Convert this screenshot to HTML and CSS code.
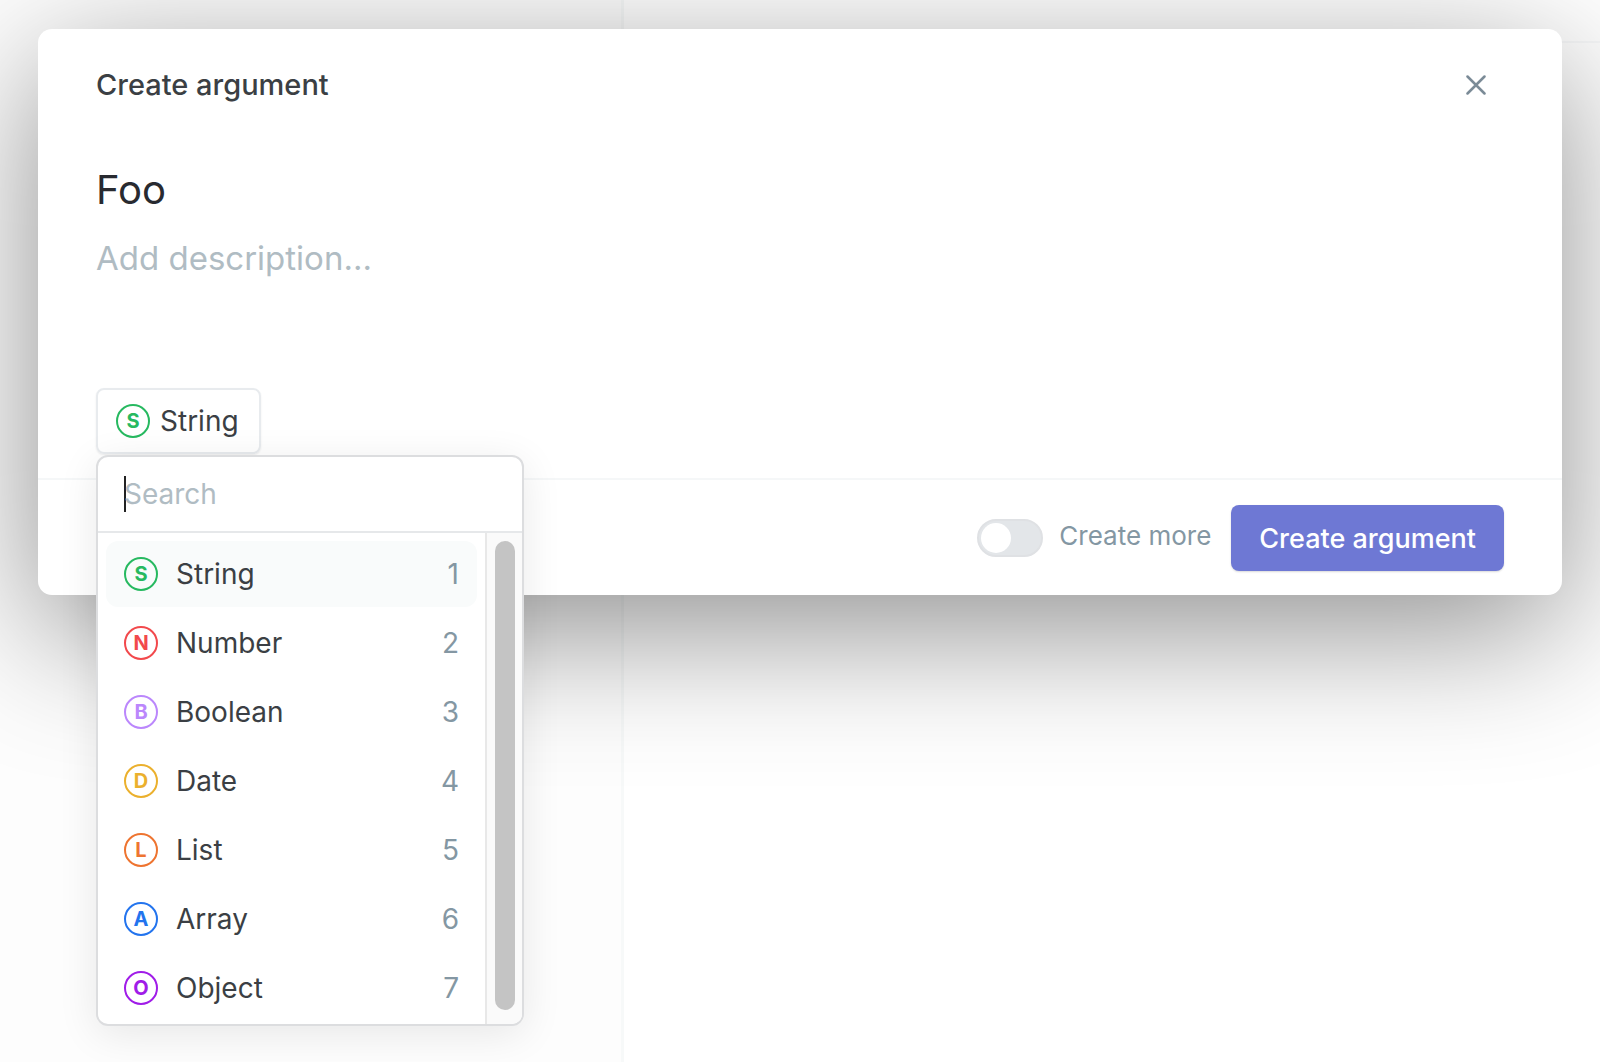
FILE: index.html
```
<!DOCTYPE html>
<html lang="en">
<head>
  <meta charset="UTF-8" />
  <meta name="viewport" content="width=device-width, initial-scale=1.0" />
  <title>Create argument</title>
  <link rel="stylesheet" href="styles.css">
</head>
<body>
  <div class="page">
    <div class="sidebar"></div>
    <div class="content">
      <div class="topbar"></div>
    </div>
  </div>

  <form class="modal" onsubmit="return false">
    <header class="modal-header">
      <h1>Create argument</h1>
      <button type="button" class="close" aria-label="Close">
        <svg width="20" height="20" viewBox="0 0 20 20" fill="none" stroke="currentColor" stroke-width="2.5" stroke-linecap="round">
          <path d="M1.5 1.5L18.5 18.5M18.5 1.5L1.5 18.5" />
        </svg>
      </button>
    </header>

    <div class="modal-body">
      <input type="text" class="name" value="Foo" aria-label="Argument name" />
      <textarea class="description" placeholder="Add description..." aria-label="Description"></textarea>

      <div class="type-picker">
        <button type="button" class="type-button"><span class="badge string">S</span>String</button>

        <div class="menu">
          <div class="search">
            <span class="caret"></span>
            <input type="text" placeholder="Search" aria-label="Search" />
          </div>
          <div class="menu-body">
            <ul class="options">
              <li><button type="button" class="option active"><span class="badge string">S</span><span class="label">String</span><span class="key">1</span></button></li>
              <li><button type="button" class="option"><span class="badge number">N</span><span class="label">Number</span><span class="key">2</span></button></li>
              <li><button type="button" class="option"><span class="badge boolean">B</span><span class="label">Boolean</span><span class="key">3</span></button></li>
              <li><button type="button" class="option"><span class="badge date">D</span><span class="label">Date</span><span class="key">4</span></button></li>
              <li><button type="button" class="option"><span class="badge list">L</span><span class="label">List</span><span class="key">5</span></button></li>
              <li><button type="button" class="option"><span class="badge array">A</span><span class="label">Array</span><span class="key">6</span></button></li>
              <li><button type="button" class="option"><span class="badge object">O</span><span class="label">Object</span><span class="key">7</span></button></li>
            </ul>
            <div class="scrollbar"><div class="thumb"></div></div>
          </div>
        </div>
      </div>
    </div>

    <footer class="modal-footer">
      <input type="checkbox" class="switch" id="createMore" />
      <label for="createMore">Create more</label>
      <button type="submit" class="submit">Create argument</button>
    </footer>
  </form>
</body>
</html>
```
FILE: styles.css
```
* {
  box-sizing: border-box;
}
body {
  font-family: Inter, sans-serif;
  font-size: 28px;
  margin: 0;
  background: #fff;
  color: #3b3f44;
  display: grid;
  min-height: 100vh;
  overflow: hidden;
}
/* page and modal share one grid cell, so the modal sits on top */
.page,
.modal {
  grid-area: 1 / 1;
}
.page {
  display: grid;
  grid-template-columns: 39% 1fr;
}
.sidebar {
  background: #fdfdfd;
  border-right: 3px solid #f7f9f9;
}
.topbar {
  height: 43px;
  border-bottom: 2px solid #f8f9fa;
}
input, textarea, button {
  font: inherit;
  color: inherit;
  margin: 0;
  padding: 0;
  border: none;
  background: none;
  outline: none;
}
button {
  cursor: pointer;
}
::placeholder {
  color: #b0bcc3;
  opacity: 1;
}
.modal {
  align-self: start;
  margin: 29px 38px;
  background: #fff;
  border-radius: 14px;
  box-shadow: 0 36px 140px rgba(0,0,0,0.44);
}
.modal-header {
  display: flex;
  justify-content: space-between;
  align-items: center;
  padding: 38px 58px 0;
}
h1 {
  margin: 0;
  font-size: 29px;
  line-height: 36px;
  font-weight: 500;
}
.close {
  display: flex;
  padding: 8px 18px;
  color: #7b8b97;
}
.modal-body {
  display: flex;
  flex-direction: column;
  padding: 63px 58px 24px;
}
.name {
  height: 48px;
  font-size: 40px;
  line-height: 48px;
  color: #282a30;
}
.description {
  height: 150px;
  margin-top: 24px;
  font-size: 33px;
  line-height: 40px;
  resize: none;
}
.type-picker {
  position: relative;
  display: flex;
}
.type-button {
  display: flex;
  align-items: center;
  gap: 10px;
  height: 66px;
  padding: 0 20px 0 18px;
  border: 2px solid #e8ebee;
  border-radius: 8px;
  box-shadow: 0 1px 2px rgba(0,0,0,0.08);
}
.badge {
  display: flex;
  flex: none;
  align-items: center;
  justify-content: center;
  width: 34px;
  height: 34px;
  border: 2px solid;
  border-radius: 50%;
  font-size: 20px;
  line-height: 30px;
  font-weight: 700;
}
.string { color: #27b960; }
.number { color: #f2494c; }
.boolean { color: #bb87fc; }
.date { color: #ebb02d; }
.list { color: #ee7430; }
.array { color: #2374ee; }
.object { color: #a01ce8; }
.menu {
  position: absolute;
  top: 67px;
  left: 0;
  width: 428px;
  background: #fff;
  border: 2px solid #dcdddf;
  border-radius: 12px;
  box-shadow: 0 8px 40px rgba(0,0,0,0.09);
  overflow: hidden;
}
.search {
  display: flex;
  align-items: center;
  height: 76px;
  padding: 0 26px;
  border-bottom: 2px solid #e6e8ea;
}
.search input {
  flex: 1;
  min-width: 0;
}
.caret {
  width: 2px;
  height: 36px;
  margin-right: -2px;
  background: #222;
}
.menu-body {
  display: flex;
}
.options {
  flex: 1;
  list-style: none;
  margin: 0;
  padding: 8px 8px 0;
}
.options li {
  padding-bottom: 3px;
}
.option {
  display: flex;
  align-items: center;
  width: 100%;
  height: 66px;
  padding: 0 18px;
  border-radius: 12px;
  text-align: left;
}
.option.active {
  background: #f9fbfb;
}
.label {
  flex: 1;
  margin-left: 18px;
}
.key {
  color: #8497a3;
}
.scrollbar {
  display: flex;
  width: 37px;
  padding: 8px 7px 14px 8px;
  background: #fafafa;
  border-left: 2px solid #e8e8e8;
}
.thumb {
  flex: 1;
  border-radius: 10px;
  background: #c4c4c4;
}
.modal-footer {
  display: flex;
  justify-content: flex-end;
  align-items: center;
  padding: 25px 58px 24px;
  border-top: 2px solid #f5f7f8;
}
.switch {
  appearance: none;
  display: flex;
  align-items: center;
  width: 66px;
  height: 38px;
  padding: 0 2px;
  border: 2px solid #dfe1e4;
  border-radius: 20px;
  background: #e3e6e9;
  cursor: pointer;
}
.switch::before {
  content: "";
  width: 30px;
  height: 30px;
  border-radius: 50%;
  background: #fff;
}
.switch:checked {
  background: #6e78d4;
  justify-content: flex-end;
}
.modal-footer label {
  margin: 0 20px 0 16px;
  font-size: 26px;
  line-height: 32px;
  padding-bottom: 4px;
  color: #8497a3;
}
.submit {
  height: 66px;
  padding: 0 28px;
  border-radius: 8px;
  background: #6e78d4;
  color: #fff;
  font-size: 27px;
  font-weight: 500;
  box-shadow: 0 1px 2px rgba(0,0,0,0.15);
}
```
